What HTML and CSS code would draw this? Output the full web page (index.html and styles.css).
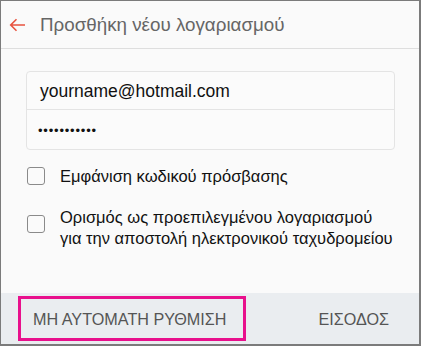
FILE: index.html
```html
<!DOCTYPE html>
<html lang="el">
<head>
<meta charset="utf-8">
<link rel="stylesheet" href="styles.css">
</head>
<body>
<div class="frame">
  <div class="header">
    <svg class="back" width="17" height="14" viewBox="0 0 17 14"><path d="M16 7H2M7.5 1.2L1.7 7l5.8 5.8" fill="none" stroke="#e8533f" stroke-width="1.6"/></svg>
    <span class="title">Προσθήκη νέου λογαριασμού</span>
  </div>
  <div class="content">
    <div class="fields">
      <div class="field email">yourname@hotmail.com</div>
      <div class="field pass">•••••••••••</div>
    </div>
    <div class="check one">
      <span class="box"></span>
      <span class="label">Εμφάνιση κωδικού πρόσβασης</span>
    </div>
    <div class="check two">
      <span class="box"></span>
      <span class="label">Ορισμός ως προεπιλεγμένου λογαριασμού<br>για την αποστολή ηλεκτρονικού ταχυδρομείου</span>
    </div>
  </div>
  <div class="footer">
    <span class="btn manual">ΜΗ ΑΥΤΟΜΑΤΗ ΡΥΘΜΙΣΗ</span>
    <span class="btn signin">ΕΙΣΟΔΟΣ</span>
  </div>
</div>
</body>
</html>
```
FILE: styles.css
```css
* { box-sizing: border-box; }
html, body { margin: 0; padding: 0; }
body { font-family: "Liberation Sans", Arial, sans-serif; background: #fff; }
.frame {
  width: 421px; height: 346px;
  border-style: solid; border-color: #7b7b7b;
  border-width: 1px 2px 2px 1px;
  background: #fafafa;
  display: flex; flex-direction: column;
}
.header {
  height: 48px; flex: none;
  border-bottom: 1px solid #dedede;
  display: flex; align-items: center;
  padding-left: 8px;
}
.back { display: block; margin-top: 1px; }
.title { margin-left: 14px; font-size: 18.8px; color: #666; }
.content { flex: 1; padding: 22px 24px 0 25px; }
.fields {
  border: 1px solid #e4e4e4; border-radius: 4px; background: #fbfbfb;
}
.field { display: flex; align-items: center; color: #111; }
.email { font-size: 17.5px; border-bottom: 1px solid #e4e4e4; height: 38px; padding: 1px 0 0 13px; }
.pass { font-size: 13px; letter-spacing: 0.8px; height: 39px; padding: 2px 0 0 11px; }
.check { display: flex; color: #111; font-size: 16.5px; }
.check.one { margin-top: 15px; align-items: center; }
.check.two { margin-top: 20px; align-items: flex-start; }
.check.two .box { margin-top: 8px; }
.box {
  width: 18px; height: 18px; flex: none;
  border: 1.5px solid #8a8a8a; border-radius: 3px; margin: 0 15px 0 1px;
}
.label { line-height: 21px; }
.check.one .label { margin-top: 1px; }
.footer {
  height: 51px; flex: none; background: #eaedf0;
  display: flex; align-items: center; justify-content: space-between;
  padding: 0 30px 0 17px; font-size: 16.2px; color: #555;
}
.btn.manual {
  border: 3px solid #e8108c; height: 45px; width: 228px;
  display: flex; align-items: center; padding-left: 12px; padding-top: 1px;
}
.btn.signin { padding-top: 1px; }
```
